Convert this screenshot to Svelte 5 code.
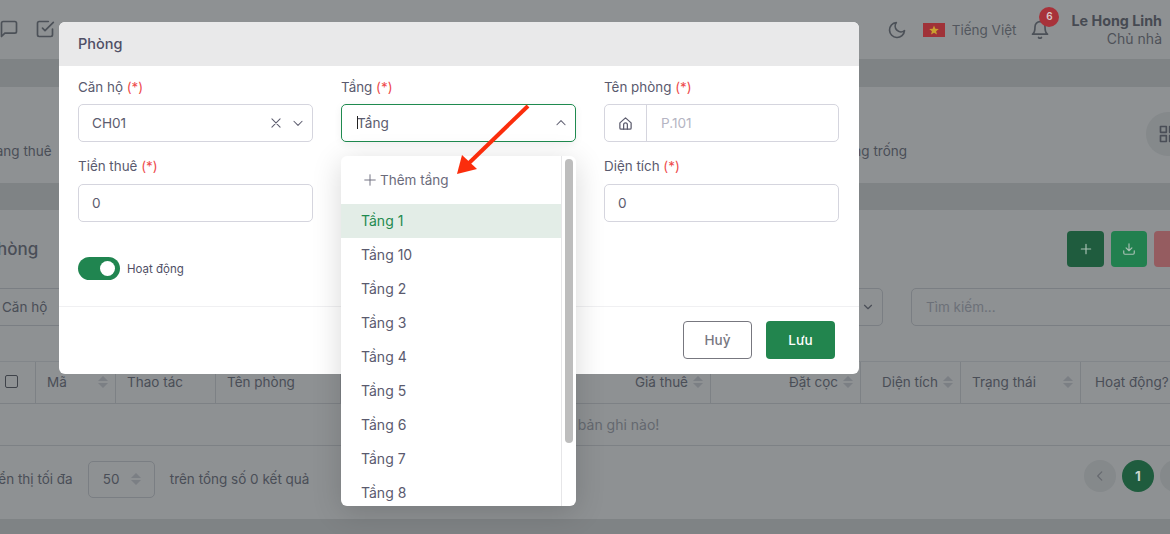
<script>
	// page behind the modal is painted directly in its dimmed colours
	const floors = ["Tầng 1", "Tầng 10", "Tầng 2", "Tầng 3", "Tầng 4", "Tầng 5", "Tầng 6", "Tầng 7", "Tầng 8"];

	const columns = [
		{ label: "Mã", sort: true },
		{ label: "Thao tác" },
		{ label: "Tên phòng" },
		{ label: "" },
		{ label: "Giá thuê", sort: true, right: true },
		{ label: "Đặt cọc", sort: true, right: true },
		{ label: "Diện tích", sort: true, right: true },
		{ label: "Trạng thái", sort: true },
		{ label: "Hoạt động?" }
	];
</script>

<div class="page">
	<header class="topbar">
		<div class="tools">
			<svg width="20" height="20" viewBox="0 0 24 24"><path d="M21 15a2 2 0 0 1-2 2H7l-4 4V5a2 2 0 0 1 2-2h14a2 2 0 0 1 2 2z" /></svg>
			<svg width="20" height="20" viewBox="0 0 24 24"><path d="M9 11l3 3L22 4" /><path d="M21 12v7a2 2 0 0 1-2 2H5a2 2 0 0 1-2-2V5a2 2 0 0 1 2-2h11" /></svg>
		</div>
		<div class="account">
			<svg class="moon" width="20" height="20" viewBox="0 0 24 24"><path d="M21 12.8A9 9 0 1 1 11.2 3a7 7 0 0 0 9.8 9.8z" /></svg>
			<div class="flag"><svg width="10" height="10" viewBox="0 0 20 20"><polygon points="10,1 12.6,7.4 19.5,7.9 14.2,12.3 15.9,19 10,15.4 4.1,19 5.8,12.3 0.5,7.9 7.4,7.4" /></svg></div>
			<span class="lang">Tiếng Việt</span>
			<div class="bell">
				<svg width="20" height="20" viewBox="0 0 24 24"><path d="M18 8A6 6 0 0 0 6 8c0 7-3 9-3 9h18s-3-2-3-9" /><path d="M13.7 21a2 2 0 0 1-3.4 0" /></svg>
				<span class="badge">6</span>
			</div>
			<div class="user">
				<strong>Le Hong Linh</strong>
				<span>Chủ nhà</span>
			</div>
		</div>
	</header>

	<section class="stats">
		<span>Đang thuê</span>
		<span class="empty">Phòng trống</span>
		<div class="round">
			<svg width="20" height="20" viewBox="0 0 24 24"><rect x="3" y="3" width="7" height="7" /><rect x="14" y="3" width="7" height="7" /><rect x="3" y="14" width="7" height="7" /><rect x="14" y="14" width="7" height="7" /></svg>
		</div>
	</section>

	<section class="list">
		<div class="list-head">
			<h2>Phòng</h2>
			<div class="actions">
				<div class="act add"><svg width="14" height="14" viewBox="0 0 24 24"><path d="M12 4v16M4 12h16" /></svg></div>
				<div class="act down"><svg width="14" height="14" viewBox="0 0 24 24"><path d="M21 15v4a2 2 0 0 1-2 2H5a2 2 0 0 1-2-2v-4M7 10l5 5 5-5M12 15V3" /></svg></div>
				<div class="act del"></div>
			</div>
		</div>

		<div class="filters">
			<div class="filter-select">
				<span>Căn hộ</span>
				<svg width="14" height="14" viewBox="0 0 24 24"><path d="M6 9l6 6 6-6" /></svg>
			</div>
			<div class="search">Tìm kiếm...</div>
		</div>

		<div class="thead">
			<div class="th check"><span class="box"></span></div>
			{#each columns as col}
				<div class="th" class:right={col.right}>
					<span>{col.label}</span>
					{#if col.sort}<i class="sort"></i>{/if}
				</div>
			{/each}
		</div>
		<div class="no-rows">Không có bản ghi nào!</div>

		<div class="pager-row">
			<span>Hiển thị tối đa</span>
			<div class="size">50 <i class="sort"></i></div>
			<span>trên tổng số 0 kết quả</span>
			<div class="pager">
				<div class="pg"><svg width="14" height="14" viewBox="0 0 24 24"><path d="M15 5l-7 7 7 7" /></svg></div>
				<div class="pg on">1</div>
				<div class="pg"></div>
			</div>
		</div>
	</section>
	<div class="foot"></div>
</div>

<div class="modal">
	<div class="modal-title">Phòng</div>
	<div class="modal-body">
		<div class="fields">
			<div class="field">
				<div class="label">Căn hộ <em>(*)</em></div>
				<div class="control">
					<span class="value">CH01</span>
					<svg class="ico" width="14" height="14" viewBox="0 0 24 24"><path d="M5 5l14 14M19 5L5 19" /></svg>
					<svg class="ico chev" width="14" height="14" viewBox="0 0 24 24"><path d="M5 9l7 7 7-7" /></svg>
				</div>
			</div>
			<div class="field">
				<div class="label">Tầng <em>(*)</em></div>
				<div class="control open">
					<span class="value"><i class="caret"></i>Tầng</span>
					<svg class="ico" width="14" height="14" viewBox="0 0 24 24"><path d="M5 15l7-7 7 7" /></svg>
				</div>
				<div class="dropdown">
					<div class="menu">
						<div class="add-floor">
							<svg width="14" height="14" viewBox="0 0 24 24"><path d="M12 3v18M3 12h18" /></svg>
							Thêm tầng
						</div>
						{#each floors as floor, i}
							<div class="floor" class:active={i === 0}>{floor}</div>
						{/each}
					</div>
					<div class="track"><div class="thumb"></div></div>
				</div>
			</div>
			<div class="field">
				<div class="label">Tên phòng <em>(*)</em></div>
				<div class="control group">
					<div class="addon">
						<svg width="15" height="15" viewBox="0 0 24 24"><path d="M3 11l9-8 9 8v8a2 2 0 0 1-2 2H5a2 2 0 0 1-2-2z" /><path d="M9 21v-7a3 3 0 0 1 6 0v7" /></svg>
					</div>
					<span class="placeholder">P.101</span>
				</div>
			</div>
			<div class="field">
				<div class="label">Tiền thuê <em>(*)</em></div>
				<div class="control"><span class="value">0</span></div>
			</div>
			<div class="field"></div>
			<div class="field">
				<div class="label">Diện tích <em>(*)</em></div>
				<div class="control"><span class="value">0</span></div>
			</div>
		</div>
		<div class="switch-row">
			<div class="switch"><span></span></div>
			<span>Hoạt động</span>
		</div>
	</div>
	<div class="modal-foot">
		<button class="cancel">Huỷ</button>
		<button class="save">Lưu</button>
	</div>
</div>

<svg class="arrow" width="1170" height="534" viewBox="0 0 1170 534">
	<line x1="528" y1="106" x2="468" y2="164" />
	<polygon points="457,174 462,155 477,169" />
</svg>

<style>
	:global(body) {
		overflow: hidden;
		background: #8e9193;
		font-family: Inter, "Liberation Sans", sans-serif;
		font-size: 13.5px;
	}

	svg {
		fill: none;
		stroke: currentColor;
		stroke-width: 2;
		stroke-linecap: round;
		stroke-linejoin: round;
		flex: none;
	}

	.page {
		width: 1240px;
		height: 534px;
		margin-left: -24px;
		overflow: hidden;
		color: #4a4e57;
		background: #7f8385;
	}

	.topbar {
		height: 59px;
		padding: 0 8px 0 24px;
		display: flex;
		justify-content: space-between;
		align-items: center;
		background: #8e9193;
		color: #4c5158;
		box-sizing: border-box;
		width: 1194px;
	}

	.tools {
		display: flex;
		gap: 16px;
		margin-left: -1px;
		margin-top: -1px;
	}

	.account {
		display: flex;
		align-items: center;
	}

	.moon {
		margin-right: 16px;
	}

	.flag {
		width: 22px;
		height: 14px;
		margin-right: 7px;
		display: flex;
		align-items: center;
		justify-content: center;
		background: #a03238;
	}

	.flag svg {
		fill: #c9a02f;
		stroke: none;
	}

	.lang {
		margin-right: 14px;
		color: #53575e;
	}

	.bell {
		position: relative;
		height: 20px;
		margin-right: 21px;
	}

	.badge {
		position: absolute;
		left: 9px;
		top: -13px;
		width: 20px;
		height: 20px;
		border-radius: 50%;
		background: #a8323a;
		color: #d8c8c8;
		font-size: 10px;
		font-weight: 600;
		line-height: 18px;
		text-align: center;
	}

	.user {
		display: flex;
		flex-direction: column;
		align-items: flex-end;
		line-height: 18px;
	}

	.user strong {
		font-size: 14.3px;
		font-weight: 700;
		color: #464a52;
	}

	.user span {
		font-size: 14px;
		color: #4e5259;
	}

	.stats {
		margin-top: 28px;
		height: 96px;
		background: #8e9193;
		position: relative;
		display: flex;
		align-items: center;
		padding: 32px 0 0 10px;
		box-sizing: border-box;
	}

	.stats .empty {
		margin-left: 777px;
	}

	.round {
		position: absolute;
		left: 1170px;
		top: 25px;
		width: 44px;
		height: 44px;
		border-radius: 50%;
		background: #85898b;
		display: flex;
		align-items: center;
		justify-content: center;
	}

	.list {
		margin-top: 27px;
		height: 309px;
		background: #8e9193;
	}

	.list-head {
		height: 78px;
		padding-top: 21px;
		box-sizing: border-box;
		display: flex;
		justify-content: space-between;
	}

	h2 {
		margin: 8px 0 0 10px;
		font-size: 17px;
		line-height: 20px;
		font-weight: 500;
		color: #4a4e57;
	}

	.actions {
		display: flex;
		gap: 7px;
		width: 149px;
	}

	.act {
		width: 36px;
		height: 36px;
		border-radius: 4px;
		display: flex;
		align-items: center;
		justify-content: center;
		color: #a9c0b4;
	}

	.add {
		width: 37px;
		background: #1f5c3e;
	}

	.down {
		background: #22804f;
	}

	.del {
		background: #955c60;
	}

	.filters {
		display: flex;
		gap: 28px;
		height: 38px;
	}

	.filter-select {
		width: 907px;
		height: 38px;
		box-sizing: border-box;
		border: 1px solid #7a7e83;
		border-radius: 5px;
		display: flex;
		align-items: center;
		justify-content: space-between;
		padding: 0 7px 0 25px;
	}

	.search {
		flex: 1;
		height: 38px;
		box-sizing: border-box;
		border: 1px solid #7a7e83;
		border-radius: 5px;
		line-height: 36px;
		padding-left: 14px;
		color: #6c7078;
	}

	.thead {
		margin-top: 35px;
		height: 43px;
		box-sizing: border-box;
		display: grid;
		grid-template-columns: 60px 80px 100px 125px 235px 135px 150px 100px 120px 140px;
		border-top: 1px solid #82868a;
		border-bottom: 1px solid #7d8185;
	}

	.th {
		display: flex;
		align-items: center;
		justify-content: space-between;
		padding: 0 7px 2px 11px;
		border-right: 1px solid #7d8185;
	}

	.th.check {
		justify-content: flex-end;
		padding: 0 17px 3px 0;
	}

	.th.right {
		justify-content: flex-end;
		gap: 5px;
	}

	.th:last-child {
		padding-left: 14px;
		border-right: 0;
	}

	.box {
		width: 11px;
		height: 11px;
		border: 1px solid #3f434a;
		border-radius: 2px;
	}

	.sort {
		display: inline-flex;
		flex-direction: column;
		gap: 2px;
	}

	.sort::before,
	.sort::after {
		content: "";
		border-left: 5px solid transparent;
		border-right: 5px solid transparent;
	}

	.sort::before {
		border-bottom: 5px solid #7b7f84;
	}

	.sort::after {
		border-top: 5px solid #7b7f84;
	}

	.no-rows {
		height: 42px;
		box-sizing: border-box;
		line-height: 41px;
		font-size: 14px;
		text-align: center;
		width: 1218px;
		color: #64686f;
		border-bottom: 1px solid #7d8185;
	}

	.pager-row {
		display: flex;
		align-items: center;
		height: 73px;
		box-sizing: border-box;
		padding: 0 24px 7px 9px;
	}

	.size {
		width: 67px;
		height: 37px;
		margin: 0 15px;
		box-sizing: border-box;
		border: 1px solid #7a7e83;
		border-radius: 5px;
		display: flex;
		align-items: center;
		justify-content: space-between;
		padding: 0 13px 0 14px;
	}

	.pager {
		margin: -6px 0 0 auto;
		display: flex;
		gap: 6px;
	}

	.pg {
		width: 32px;
		height: 32px;
		border-radius: 50%;
		background: #85898b;
		color: #66696f;
		display: flex;
		align-items: center;
		justify-content: center;
	}

	.pg.on {
		background: #1f5c3e;
		color: #c9d5ce;
		font-weight: 700;
	}

	.foot {
		height: 15px;
	}

	/* modal */
	.modal {
		position: absolute;
		left: 59px;
		top: 22px;
		width: 800px;
		height: 352px;
		background: #fff;
		border-radius: 6px;
		color: #4f4f66;
		display: flex;
		flex-direction: column;
	}

	.modal-title {
		height: 44px;
		padding-left: 19px;
		line-height: 44px;
		background: #e9e9ea;
		border-radius: 6px 6px 0 0;
		font-size: 14.5px;
		font-weight: 500;
	}

	.modal-body {
		height: 241px;
		box-sizing: border-box;
		padding: 13px 20px 0 19px;
		border-bottom: 1px solid #f0f0f2;
	}

	.fields {
		display: grid;
		grid-template-columns: repeat(3, 235px);
		column-gap: 28px;
		row-gap: 16px;
	}

	.field {
		position: relative;
		min-height: 63px;
	}

	.label {
		height: 17px;
		margin-bottom: 8px;
		line-height: 17px;
		font-size: 13.4px;
		color: #5a5a6e;
	}

	.field:nth-child(n + 4) .label {
		margin-bottom: 9px;
	}

	.label em {
		font-style: normal;
		color: #ee4b4b;
	}

	.control {
		height: 38px;
		box-sizing: border-box;
		border: 1px solid #d5d5de;
		border-radius: 5px;
		display: flex;
		align-items: center;
		gap: 8px;
		padding: 0 7px 0 13px;
		color: #5c5c6e;
		font-size: 13.6px;
	}

	.control.open {
		border-color: #1f8a4f;
		padding-left: 15px;
		box-shadow: 0 2px 8px rgba(0, 0, 0, 0.06);
	}

	.value {
		flex: 1;
		position: relative;
	}

	.caret {
		position: absolute;
		left: 0;
		top: 1px;
		height: 13px;
		border-left: 1px solid #222;
	}

	.ico {
		color: #5c5c6e;
		stroke-width: 1.8;
	}

	.control.group {
		padding: 0;
		gap: 0;
	}

	.addon {
		width: 41px;
		height: 36px;
		border-right: 1px solid #d5d5de;
		display: flex;
		align-items: center;
		justify-content: center;
	}

	.placeholder {
		margin-left: 14px;
		color: #b5b5c3;
	}

	.dropdown {
		position: absolute;
		left: 0;
		top: 77px;
		width: 235px;
		height: 350px;
		z-index: 2;
		display: flex;
		background: #fff;
		border-radius: 6px;
		box-shadow: 0 6px 30px rgba(0, 0, 0, 0.16);
		overflow: hidden;
	}

	.menu {
		width: 220px;
		flex: none;
		border-right: 1px solid #e6e6e8;
	}

	.add-floor {
		height: 48px;
		padding-left: 22px;
		display: flex;
		align-items: center;
		gap: 3px;
		color: #6b6b7b;
	}

	.add-floor svg {
		stroke-width: 1.6;
	}

	.floor {
		height: 34px;
		padding-left: 20px;
		line-height: 34px;
		font-size: 14px;
		color: #5a5a6e;
	}

	.floor.active {
		background: #e3ede7;
		color: #1f8a4f;
	}

	.track {
		flex: 1;
		padding: 3px 3px 0 3px;
	}

	.thumb {
		width: 8px;
		height: 284px;
		border-radius: 4px;
		background: #bdbdbd;
	}

	.switch-row {
		margin-top: 35px;
		display: flex;
		align-items: center;
		gap: 7px;
		font-size: 11.5px;
	}

	.switch {
		width: 42px;
		height: 23px;
		border-radius: 12px;
		background: #208550;
		position: relative;
	}

	.switch span {
		position: absolute;
		right: 5px;
		top: 4px;
		width: 15px;
		height: 15px;
		border-radius: 50%;
		background: #fff;
	}

	.modal-foot {
		flex: 1;
		padding: 14px 24px 0 0;
		display: flex;
		justify-content: flex-end;
		align-items: flex-start;
		gap: 14px;
	}

	button {
		width: 69px;
		height: 38px;
		border-radius: 4px;
		font: inherit;
		font-weight: 500;
	}

	.cancel {
		background: #fff;
		border: 1px solid #77777f;
		color: #77777f;
	}

	.save {
		background: #22854e;
		border: 0;
		color: #fff;
	}

	.arrow {
		position: absolute;
		left: 0;
		top: 0;
		z-index: 3;
		pointer-events: none;
	}

	.arrow line {
		stroke: #fb2d0c;
		stroke-width: 4;
		stroke-linecap: butt;
	}

	.arrow polygon {
		fill: #fb2d0c;
		stroke: none;
	}
</style>
